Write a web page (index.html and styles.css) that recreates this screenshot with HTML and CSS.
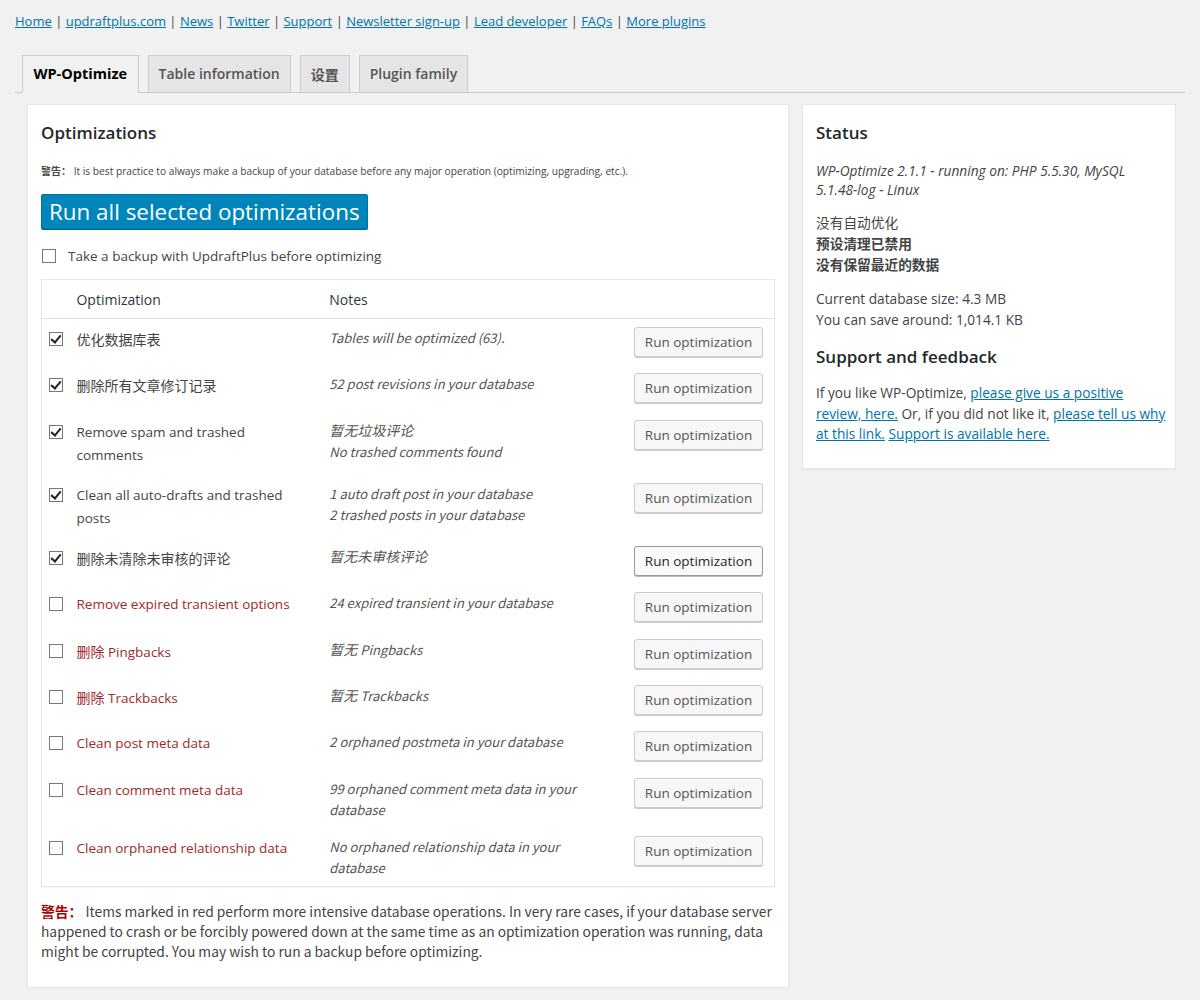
FILE: index.html
```html
<!DOCTYPE html>
<html lang="en">
<head>
    <meta charset="UTF-8">
    <title>WP-Optimize</title>
    <link rel="stylesheet" href="styles.css">
</head>
<body>

<div class="wrap">
    <p class="top-links">
        <a href="#">Home</a> | <a href="#">updraftplus.com</a> | <a href="#">News</a> | <a href="#">Twitter</a> | <a href="#">Support</a> | <a href="#">Newsletter sign-up</a> | <a href="#">Lead developer</a> | <a href="#">FAQs</a> | <a href="#">More plugins</a>
    </p>

    <h2 class="nav-tab-wrapper">
        <a href="#" class="nav-tab nav-tab-active">WP-Optimize</a>
        <a href="#" class="nav-tab">Table information</a>
        <a href="#" class="nav-tab cjk">设置</a>
        <a href="#" class="nav-tab">Plugin family</a>
    </h2>

    <div class="columns">
        <div class="postbox main-box">
            <h3>Optimizations</h3>
            <p class="small-warning"><b class="cjk">警告：</b> It is best practice to always make a backup of your database before any major operation (optimizing, upgrading, etc.).</p>

            <button class="button-primary">Run all selected optimizations</button>

            <label class="backup-line">
                <input type="checkbox"> Take a backup with UpdraftPlus before optimizing
            </label>

            <table class="optimizations">
                <thead>
                    <tr>
                        <th class="check"></th>
                        <th class="name">Optimization</th>
                        <th class="notes">Notes</th>
                        <th class="action"></th>
                    </tr>
                </thead>
                <tbody>
                    <tr>
                        <td class="check"><input type="checkbox" checked></td>
                        <td class="name cjk">优化数据库表</td>
                        <td class="notes">Tables will be optimized (63).</td>
                        <td class="action"><button class="button">Run optimization</button></td>
                    </tr>
                    <tr>
                        <td class="check"><input type="checkbox" checked></td>
                        <td class="name cjk">删除所有文章修订记录</td>
                        <td class="notes">52 post revisions in your database</td>
                        <td class="action"><button class="button">Run optimization</button></td>
                    </tr>
                    <tr>
                        <td class="check"><input type="checkbox" checked></td>
                        <td class="name">Remove spam and trashed comments</td>
                        <td class="notes"><span class="zh">暂无垃圾评论</span><br>No trashed comments found</td>
                        <td class="action"><button class="button">Run optimization</button></td>
                    </tr>
                    <tr>
                        <td class="check"><input type="checkbox" checked></td>
                        <td class="name">Clean all auto-drafts and trashed posts</td>
                        <td class="notes">1 auto draft post in your database<br>2 trashed posts in your database</td>
                        <td class="action"><button class="button">Run optimization</button></td>
                    </tr>
                    <tr>
                        <td class="check"><input type="checkbox" checked></td>
                        <td class="name cjk">删除未清除未审核的评论</td>
                        <td class="notes"><span class="zh">暂无未审核评论</span></td>
                        <td class="action"><button class="button focused">Run optimization</button></td>
                    </tr>
                    <tr class="intensive">
                        <td class="check"><input type="checkbox"></td>
                        <td class="name">Remove expired transient options</td>
                        <td class="notes">24 expired transient in your database</td>
                        <td class="action"><button class="button">Run optimization</button></td>
                    </tr>
                    <tr class="intensive">
                        <td class="check"><input type="checkbox"></td>
                        <td class="name"><span class="cjk">删除</span> Pingbacks</td>
                        <td class="notes"><span class="zh">暂无</span> Pingbacks</td>
                        <td class="action"><button class="button">Run optimization</button></td>
                    </tr>
                    <tr class="intensive">
                        <td class="check"><input type="checkbox"></td>
                        <td class="name"><span class="cjk">删除</span> Trackbacks</td>
                        <td class="notes"><span class="zh">暂无</span> Trackbacks</td>
                        <td class="action"><button class="button">Run optimization</button></td>
                    </tr>
                    <tr class="intensive">
                        <td class="check"><input type="checkbox"></td>
                        <td class="name">Clean post meta data</td>
                        <td class="notes">2 orphaned postmeta in your database</td>
                        <td class="action"><button class="button">Run optimization</button></td>
                    </tr>
                    <tr class="intensive">
                        <td class="check"><input type="checkbox"></td>
                        <td class="name">Clean comment meta data</td>
                        <td class="notes">99 orphaned comment meta data in your database</td>
                        <td class="action"><button class="button">Run optimization</button></td>
                    </tr>
                    <tr class="intensive">
                        <td class="check"><input type="checkbox"></td>
                        <td class="name">Clean orphaned relationship data</td>
                        <td class="notes">No orphaned relationship data in your database</td>
                        <td class="action"><button class="button">Run optimization</button></td>
                    </tr>
                </tbody>
            </table>

            <p class="footer-warning"><b class="red">警告：</b> Items marked in red perform more intensive database operations. In very rare cases, if your database server happened to crash or be forcibly powered down at the same time as an optimization operation was running, data might be corrupted. You may wish to run a backup before optimizing.</p>
        </div>

        <div class="postbox side-box">
            <h3>Status</h3>
            <p class="version">WP-Optimize 2.1.1 - running on: PHP 5.5.30, MySQL 5.1.48-log - Linux</p>
            <p class="cjk-lines">
                <span>没有自动优化</span>
                <b>预设清理已禁用</b>
                <b>没有保留最近的数据</b>
            </p>
            <p class="db-size">
                Current database size: 4.3 MB<br>
                You can save around: 1,014.1 KB
            </p>
            <h3 class="support">Support and feedback</h3>
            <p class="feedback">If you like WP-Optimize, <a href="#">please give us a positive review, here.</a> Or, if you did not like it, <a href="#">please tell us why at this link.</a> <a href="#">Support is available here.</a></p>
        </div>
    </div>
</div>

</body>
</html>
```

FILE: styles.css
```css
body {
    margin: 0;
    background: #f1f1f1;
    color: #444;
    font-family: "Open Sans", "Noto Sans CJK SC", sans-serif;
    font-size: 13px;
}
.cjk {
    font-family: "Noto Sans CJK SC", sans-serif;
}
.wrap {
    padding: 0 15px;
}
a {
    color: #0073aa;
}
.top-links {
    margin: 0;
    padding-top: 11px;
    line-height: 20px;
    font-size: 13px;
}
.nav-tab-wrapper {
    margin: 24px 0 0;
    padding: 0;
    border-bottom: 1px solid #ccc;
    display: flex;
    gap: 9px;
    padding-left: 7px;
}
.nav-tab {
    display: block;
    padding: 6px 10px;
    margin-bottom: -1px;
    font-size: 14px;
    line-height: 24px;
    font-weight: 600;
    color: #555;
    background: #e5e5e5;
    border: 1px solid #ccc;
    text-decoration: none;
}
.nav-tab-active {
    background: #f1f1f1;
    border-bottom-color: #f1f1f1;
    color: #000;
    font-size: 14.5px;
    font-weight: 700;
    padding: 6px 10.5px;
}
.columns {
    display: flex;
    align-items: flex-start;
    gap: 13px;
    margin: 11px 9px 0 12px;
}
.postbox {
    background: #fff;
    border: 1px solid #e5e5e5;
    box-shadow: 0 1px 1px rgba(0, 0, 0, 0.04);
    padding: 0 13px;
}
.main-box {
    width: 734px;
}
.side-box {
    width: 353px;
    padding-right: 6px;
    padding-bottom: 23px;
    font-size: 13.7px;
}
h3 {
    margin: 16px 0 0;
    font-size: 17px;
    line-height: 24px;
    font-weight: 600;
    color: #23282d;
}
.small-warning {
    margin: 19px 0 0;
    font-size: 10.2px;
    line-height: 14px;
}
.small-warning b {
    font-size: 10px;
}
.button-primary {
    display: block;
    margin-top: 16px;
    height: 35px;
    padding: 0 7px;
    font-family: "Open Sans", sans-serif;
    font-size: 22.4px;
    color: #fff;
    background: #0085ba;
    border: 1px solid #0073aa;
    border-radius: 2px;
    box-shadow: 0 1px 0 #006799;
    cursor: pointer;
}
.backup-line {
    display: flex;
    align-items: center;
    gap: 12px;
    margin-top: 17px;
    font-size: 13.5px;
    line-height: 20px;
    padding-left: 1px;
}
input[type="checkbox"] {
    appearance: none;
    -webkit-appearance: none;
    width: 14px;
    height: 14px;
    margin: 0;
    border: 1px solid #777;
    background: #fff;
    position: relative;
    flex: none;
}
input[type="checkbox"]:checked::before {
    content: "";
    position: absolute;
    left: 3px;
    top: 0px;
    width: 4px;
    height: 8px;
    border-right: 2.5px solid #222;
    border-bottom: 2.5px solid #222;
    transform: rotate(40deg);
}
.optimizations {
    margin-top: 13px;
    width: 100%;
    border: 1px solid #e5e5e5;
    border-collapse: collapse;
    box-shadow: 0 1px 1px rgba(0, 0, 0, 0.04);
}
.optimizations th {
    text-align: left;
    font-weight: 400;
    font-size: 14px;
    color: #32373c;
    height: 38px;
    padding: 0;
    border-bottom: 1px solid #e1e1e1;
}
.optimizations td {
    vertical-align: top;
    padding: 8px 0 8.3px;
}
.check {
    width: 35px;
    box-sizing: border-box;
    padding-left: 7px !important;
}
.optimizations td.check input {
    margin-top: 5px;
}
.name {
    width: 238px;
    padding-right: 15px !important;
}
.optimizations td.name {
    font-size: 13.5px;
    line-height: 23px;
    padding-top: 9px;
}
.optimizations td.name.cjk,
.optimizations td.name .cjk {
    font-size: 14px;
}
.notes {
    width: 260px;
    padding-right: 45px !important;
}
.optimizations td.notes {
    font-family: "Noto Sans CJK SC", sans-serif;
    font-style: italic;
    font-size: 13px;
    line-height: 21px;
    color: #555;
}
.notes .zh {
    font-size: 14px;
}
.action {
    padding-right: 11px !important;
}
.intensive td.name {
    color: #a02a2a;
}
.button {
    width: 129px;
    height: 30px;
    padding: 0;
    font-family: "Open Sans", sans-serif;
    font-size: 13.5px;
    color: #555;
    background: #f7f7f7;
    border: 1px solid #ccc;
    border-radius: 3px;
    box-shadow: 0 1px 0 #ccc;
    cursor: pointer;
}
.button.focused {
    border-color: #999;
    background: #fafafa;
    color: #23282d;
    box-shadow: 0 1px 0 #bbb;
}
.footer-warning {
    margin: 14px 0 0;
    padding-bottom: 26px;
    font-family: "Noto Sans CJK SC", sans-serif;
    font-size: 13.8px;
    line-height: 20px;
}
.red {
    color: #a00;
}
.version {
    margin: 17px 0 0;
    font-style: italic;
    line-height: 18.5px;
}
.cjk-lines {
    margin: 13px 0 0;
    font-family: "Noto Sans CJK SC", sans-serif;
    line-height: 21px;
}
.cjk-lines span,
.cjk-lines b {
    display: block;
}
.db-size {
    margin: 13px 0 0;
    line-height: 21px;
}
h3.support {
    margin-top: 15px;
}
.feedback {
    margin: 14px 0 0;
    line-height: 20.5px;
}
```
